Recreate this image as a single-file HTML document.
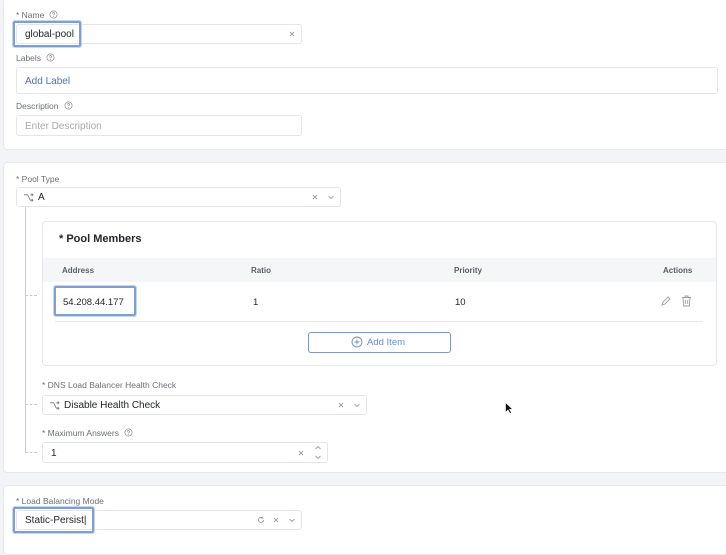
<!DOCTYPE html>
<html><head><meta charset="utf-8"><style>
*{box-sizing:border-box;margin:0;padding:0}
body{width:726px;height:540px;overflow:hidden;background:#f3f4f7;font-family:"Liberation Sans",sans-serif;position:relative}
.a{position:absolute}
.card{position:absolute;left:3px;right:-4px;background:#fff;border:1px solid #e6e8ec;border-radius:4px}
.lbl{position:absolute;font-size:8.5px;color:#6b7079;white-space:nowrap}
.help{display:inline-block;margin-left:5px;vertical-align:-1px}
.inp{position:absolute;border:1px solid #e3e5ea;border-radius:3px;background:#fff;font-size:10px;color:#22252b}
.hl{position:absolute;border:2px solid #7f9fd1;border-radius:2px;box-shadow:0 0 0 1px #c7d5ee}
.x{position:absolute}
</style></head><body>
<svg width="0" height="0" style="position:absolute"><defs>
<symbol id="h" viewBox="0 0 10 10"><circle cx="5" cy="5" r="4" fill="none" stroke="#8a8f98" stroke-width="0.8"/><path d="M3.8 4a1.2 1.2 0 1 1 1.6 1.1c-.3.2-.4.4-.4.8" fill="none" stroke="#8a8f98" stroke-width="0.8"/><circle cx="5" cy="7.3" r="0.5" fill="#8a8f98"/></symbol>
<symbol id="cx" viewBox="0 0 8 8"><path d="M2 2l4 4M6 2l-4 4" stroke="#9aa0a8" stroke-width="0.9"/></symbol>
<symbol id="cv" viewBox="0 0 8 8"><path d="M1.5 3l2.5 2.5L6.5 3" fill="none" stroke="#9aa0a8" stroke-width="0.9"/></symbol>
<symbol id="tr" viewBox="0 0 12 10"><path d="M1 2h4l3 6h3M8 2h3M9.5 0.5L11 2 9.5 3.5M9.5 6.5L11 8 9.5 9.5" fill="none" stroke="#777" stroke-width="0.9"/></symbol>
</defs></svg>
<div class="card" style="top:-2px;height:152px"></div>
<div class="card" style="top:162px;height:311px"></div>
<div class="card" style="top:485px;height:70px"></div>

<div class="lbl" style="left:16px;top:10px">* Name<svg class="help" width="9" height="9"><use href="#h"/></svg></div>
<div class="inp" style="left:16px;top:24px;width:286px;height:20px"><span class="a" style="left:8px;top:4px">global-pool</span><svg class="x" style="left:271px;top:5px" width="8" height="8"><use href="#cx"/></svg></div>
<div class="hl" style="left:13px;top:21px;width:68px;height:26px"></div>

<div class="lbl" style="left:16px;top:53px">Labels<svg class="help" width="9" height="9"><use href="#h"/></svg></div>
<div class="inp" style="left:16px;top:67px;width:702px;height:27px"><span class="a" style="left:8px;top:8px;color:#4b72c4">Add Label</span></div>

<div class="lbl" style="left:16px;top:101px">Description<svg class="help" width="9" height="9"><use href="#h"/></svg></div>
<div class="inp" style="left:16px;top:115px;width:286px;height:21px"><span class="a" style="left:8px;top:5px;color:#a5aab2">Enter Description</span></div>

<div class="lbl" style="left:16px;top:174px">* Pool Type</div>
<div class="inp" style="left:16px;top:187px;width:325px;height:20px"><svg class="a" style="left:6px;top:5px" width="11" height="9"><use href="#tr"/></svg><span class="a" style="left:21px;top:4px">A</span><svg class="x" style="left:294px;top:5px" width="8" height="8"><use href="#cx"/></svg><svg class="x" style="left:310px;top:5px" width="8" height="8"><use href="#cv"/></svg></div>

<div class="a" style="left:25px;top:207px;width:1px;height:246px;background:#c8ccd2"></div>
<div class="a" style="left:25px;top:295px;width:12px;border-top:1px dashed #c8ccd2"></div>
<div class="a" style="left:25px;top:404px;width:12px;border-top:1px dashed #c8ccd2"></div>
<div class="a" style="left:25px;top:452px;width:12px;border-top:1px dashed #c8ccd2"></div>

<div class="a" style="left:42px;top:221px;width:675px;height:145px;border:1px solid #e6e8ec;border-radius:4px;background:#fff"></div>
<div class="a" style="left:59px;top:233px;font-size:11px;font-weight:bold;color:#23262d">* Pool Members</div>
<div class="a" style="left:43px;top:258px;width:673px;height:24px;background:#f5f6f8"></div>
<div class="a" style="left:62px;top:266px;font-size:8px;color:#5a5f68;font-weight:bold">Address</div>
<div class="a" style="left:251px;top:266px;font-size:8px;color:#5a5f68;font-weight:bold">Ratio</div>
<div class="a" style="left:454px;top:266px;font-size:8px;color:#5a5f68;font-weight:bold">Priority</div>
<div class="a" style="left:663px;top:266px;font-size:8px;color:#5a5f68;font-weight:bold">Actions</div>
<div class="a" style="left:55px;top:321px;width:648px;height:1px;background:#e6e8ec"></div>
<div class="a" style="left:63px;top:297px;font-size:9.5px;color:#23262d">54.208.44.177</div>
<div class="hl" style="left:54px;top:286px;width:82px;height:30px"></div>
<div class="a" style="left:253px;top:297px;font-size:9.5px;color:#23262d">1</div>
<div class="a" style="left:455px;top:297px;font-size:9.5px;color:#23262d">10</div>
<svg class="a" style="left:660px;top:295px" width="12" height="12" viewBox="0 0 12 12"><path d="M2 10l1-3 5-5 2 2-5 5z" fill="none" stroke="#9aa0a8" stroke-width="0.9"/></svg>
<svg class="a" style="left:681px;top:295px" width="11" height="12" viewBox="0 0 11 12"><path d="M1 2.5h9M4 2.5V1h3v1.5M2 2.5l.6 8.5h5.8L9 2.5M4.3 5v4M6.7 5v4" fill="none" stroke="#9aa0a8" stroke-width="0.9"/></svg>
<div class="a" style="left:308px;top:332px;width:143px;height:21px;border:1px solid #7f96c4;border-radius:3px"></div>
<svg class="a" style="left:351px;top:336px" width="12" height="12" viewBox="0 0 12 12"><circle cx="6" cy="6" r="5" fill="none" stroke="#6f8cc9" stroke-width="0.9"/><path d="M6 3.5v5M3.5 6h5" stroke="#6f8cc9" stroke-width="0.9"/></svg>
<div class="a" style="left:367px;top:337px;font-size:9.5px;color:#6f8cc9">Add Item</div>

<div class="lbl" style="left:42px;top:380px">* DNS Load Balancer Health Check</div>
<div class="inp" style="left:42px;top:395px;width:325px;height:20px"><svg class="a" style="left:6px;top:5px" width="11" height="9"><use href="#tr"/></svg><span class="a" style="left:21px;top:4px">Disable Health Check</span><svg class="x" style="left:294px;top:5px" width="8" height="8"><use href="#cx"/></svg><svg class="x" style="left:310px;top:5px" width="8" height="8"><use href="#cv"/></svg></div>

<div class="lbl" style="left:42px;top:428px">* Maximum Answers<svg class="help" width="9" height="9"><use href="#h"/></svg></div>
<div class="inp" style="left:42px;top:442px;width:286px;height:21px"><span class="a" style="left:8px;top:5px">1</span><svg class="x" style="left:254px;top:6px" width="8" height="8"><use href="#cx"/></svg><svg class="x" style="left:271px;top:1px;transform:rotate(180deg)" width="8" height="8"><use href="#cv"/></svg><svg class="x" style="left:271px;top:10px" width="8" height="8"><use href="#cv"/></svg></div>

<div class="lbl" style="left:16px;top:496px">* Load Balancing Mode</div>
<div class="inp" style="left:16px;top:510px;width:286px;height:20px"><span class="a" style="left:8px;top:4px">Static-Persist|</span><svg class="x" style="left:240px;top:5px" width="8" height="8" viewBox="0 0 8 8"><path d="M6.5 4A2.5 2.5 0 1 1 5.6 2M5.8 0.8v1.5h-1.5" fill="none" stroke="#9aa0a8" stroke-width="0.9"/></svg><svg class="x" style="left:255px;top:5px" width="8" height="8"><use href="#cx"/></svg><svg class="x" style="left:271px;top:5px" width="8" height="8"><use href="#cv"/></svg></div>
<div class="hl" style="left:13px;top:507px;width:81px;height:26px"></div>

<svg class="a" style="left:505px;top:402px" width="8" height="12" viewBox="0 0 8 12"><path d="M0.5 0.5v10l2.5-2.5 2 3.5 1.5-.8-2-3.3h3.3z" fill="#111" stroke="#fff" stroke-width="0.6"/></svg>
</body></html>
